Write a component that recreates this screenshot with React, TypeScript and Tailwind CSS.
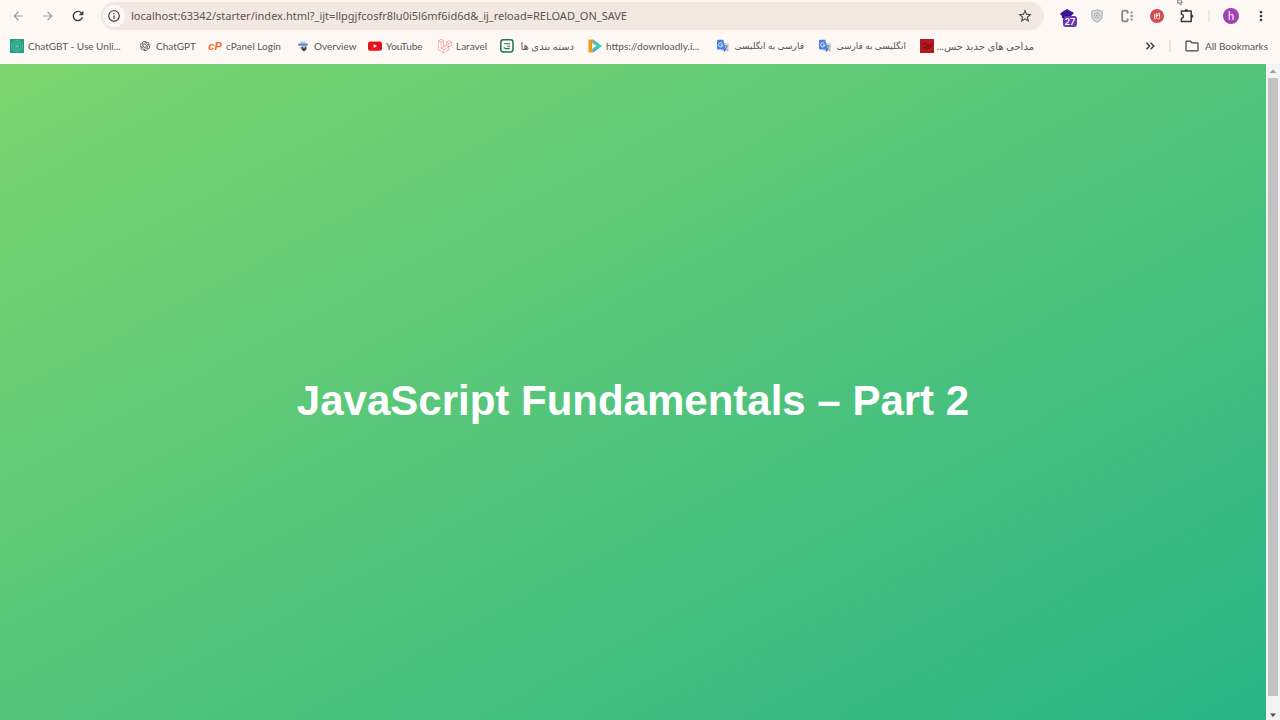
import type { ReactNode } from "react";
import { FaLaravel } from "react-icons/fa";
import {
  MdArrowBack,
  MdArrowForward,
  MdInfoOutline,
  MdMoreVert,
  MdRefresh,
  MdStarBorder,
} from "react-icons/md";
import { SiOpenai } from "react-icons/si";

function SpiralIcon() {
  return (
    <svg viewBox="0 0 14 14" className="size-full">
      <rect width="14" height="14" fill="#1f9f7c" />
      <g fill="none" stroke="#6fcbb2" strokeWidth="0.6">
        <circle cx="7" cy="7" r="5.6" />
        <circle cx="7" cy="7" r="3.8" />
        <circle cx="7" cy="7" r="2" />
      </g>
      <circle cx="7" cy="7" r="0.7" fill="#d5f5ea" />
    </svg>
  );
}

function OverviewIcon() {
  return (
    <svg viewBox="0 0 14 14" className="size-full">
      <path d="M4 4.6 L4.8 2.6 H9.2 L10 4.6 Z" fill="#a9bfe4" />
      <path d="M2.5 4.6 H11.5 L12 6.8 H2 Z" fill="#5b84cc" />
      <path d="M3 8 H6 V10 H4.4 Z" fill="#b9cbe8" />
      <path d="M5.6 7.6 H10.4 V10.4 L8 12.6 L5.6 10.4 Z" fill="#39424f" />
      <path d="M7 7.6 H9 L8 9.8 Z" fill="#fff" />
    </svg>
  );
}

function YoutubeIcon() {
  return (
    <svg viewBox="0 0 14 14" className="size-full">
      <rect x="0" y="2.4" width="14" height="9.4" rx="2.2" fill="#e3131b" />
      <path d="M5.6 5.2 L9 7.1 L5.6 9 Z" fill="#fff" />
    </svg>
  );
}

function ListIcon() {
  return (
    <svg viewBox="0 0 14 14" className="size-full" fill="none" stroke="#1c7a50">
      <rect x="0.8" y="0.8" width="12.2" height="12.2" rx="2.4" strokeWidth="1.5" />
      <path d="M4 4.8 H10 M4 8 Q4.2 9.6 6 9.6 H9.6 M7 7.2 H10" strokeWidth="1.1" />
    </svg>
  );
}

function DownloadlyIcon() {
  return (
    <svg viewBox="0 0 14 14" className="size-full">
      <path d="M0.5 0.5 H5 V13.5 H0.5 Z" fill="#ee9a22" />
      <path d="M5 0.5 L14 7 L5 13.5 Z" fill="#35d0b4" />
      <path d="M5 0.5 L9.5 3.7 L5 6 Z" fill="#5cb3dc" />
      <path d="M4 4 L8.6 7 L4 10 Z" fill="#fff4e4" />
      <path d="M5 10 L9 7.4 L11 9.2 L5 13.5 Z" fill="#3bb4e8" />
    </svg>
  );
}

function TranslateIcon() {
  return (
    <svg viewBox="0 0 14 14" className="size-full">
      <rect x="5.5" y="4" width="7.5" height="8.6" rx="1" fill="#d5d9e2" />
      <path d="M7.6 7 H12 M9.8 6 V7 M11.3 7 Q10.5 10 8.3 11 M8.6 8.3 Q9.8 10.4 11.8 11" fill="none" stroke="#6d7f9e" strokeWidth="0.8" />
      <path d="M2 0.8 H7.2 L10 10.4 H2 Q1 10.4 1 9.4 V1.8 Q1 0.8 2 0.8 Z" fill="#4a80e2" />
      <path d="M7.4 10.4 H10 L8.6 12.8 Z" fill="#2f57b5" />
      <path d="M6.3 4.5 A2.1 2.1 0 1 0 6.8 6 H4.8" fill="none" stroke="#fff" strokeWidth="0.9" />
    </svg>
  );
}

function RedIcon() {
  return (
    <svg viewBox="0 0 14 14" className="size-full">
      <rect width="14" height="14" fill="#b51a22" />
      <path d="M2 5.5 Q5 3 7 5.5 T12 4.5 M2.5 9.5 Q5 7 7 8.8 T11.5 7 M5 11 L9 6" fill="none" stroke="#74101a" strokeWidth="1.2" />
    </svg>
  );
}

function CpanelIcon() {
  return (
    <span className="font-['Liberation_Sans',sans-serif] text-[11px] font-bold italic text-[#f26a2e]">
      cP
    </span>
  );
}

type Bookmark = { label: string; style: string; icon: ReactNode; rtl?: boolean };

const bookmarks: Bookmark[] = [
  { label: "ChatGBT - Use Unli...", style: "w-24", icon: <SpiralIcon /> },
  { label: "ChatGPT", style: "w-[38px]", icon: <SiOpenai className="size-2.5 text-[#4b4745]" /> },
  { label: "cPanel Login", style: "w-14", icon: <CpanelIcon /> },
  { label: "Overview", style: "w-10", icon: <OverviewIcon /> },
  { label: "YouTube", style: "w-[38px]", icon: <YoutubeIcon /> },
  { label: "Laravel", style: "w-[30px]", icon: <FaLaravel className="size-full text-[#ee7c74]" /> },
  { label: "دسته بندی ها", style: "w-14", icon: <ListIcon />, rtl: true },
  { label: "https://downloadly.i...", style: "w-24", icon: <DownloadlyIcon /> },
  { label: "فارسی به انگلیسی", style: "w-[70px] text-[9px]", icon: <TranslateIcon />, rtl: true },
  { label: "انگلیسی به فارسی", style: "w-[70px] text-[9px]", icon: <TranslateIcon />, rtl: true },
  { label: "مداحی های جدید حس...", style: "w-24", icon: <RedIcon />, rtl: true },
];

function ToolButton({ label, children }: { label: string; children: ReactNode }) {
  return (
    <button
      type="button"
      aria-label={label}
      className="flex h-7 w-[30px] shrink-0 items-center justify-center"
    >
      {children}
    </button>
  );
}

function Toolbar() {
  return (
    <div className="flex h-8 items-center pl-[3px] pr-1">
      <ToolButton label="Back">
        <MdArrowBack className="size-3.5 text-[#a49c98]" />
      </ToolButton>
      <ToolButton label="Forward">
        <MdArrowForward className="size-3.5 text-[#a49c98]" />
      </ToolButton>
      <ToolButton label="Reload">
        <MdRefresh className="size-4 text-[#3f3735]" />
      </ToolButton>

      <div className="mx-2 flex h-7 min-w-0 flex-1 items-center rounded-full bg-[#f3e7e2] pl-0.5">
        <button
          type="button"
          aria-label="Site information"
          className="flex size-[22px] shrink-0 items-center justify-center rounded-full bg-[#fef8f4]"
        >
          <MdInfoOutline className="size-3.5 text-[#3f3735]" />
        </button>
        <input
          type="text"
          aria-label="Address"
          defaultValue="localhost:63342/starter/index.html?_ijt=llpgjfcosfr8lu0i5l6mf6id6d&_ij_reload=RELOAD_ON_SAVE"
          className="ml-1.5 min-w-0 flex-1 bg-transparent font-['Noto_Sans',sans-serif] text-[11px] text-[#5d5350] outline-none"
        />
        <button
          type="button"
          aria-label="Bookmark this page"
          className="flex w-[38px] shrink-0 items-center justify-center"
        >
          <MdStarBorder className="size-4 text-[#4a413e]" />
        </button>
      </div>

      <ToolButton label="Extension with 27 items">
        <span className="relative size-4">
          <svg viewBox="0 0 16 16" className="size-4">
            <path d="M8 1 L15 5 L12 8 V10 H3 V8 L1 6 L3 4 Z" fill="#3b149b" />
            <path d="M3 8 H12 V9.4 H3 Z" fill="#220a66" />
          </svg>
          <span className="absolute left-1 top-2 flex h-[11px] w-[14px] items-center justify-center rounded-[3px] bg-[#6636b3] text-[9px] font-bold text-white">
            27
          </span>
        </span>
      </ToolButton>
      <ToolButton label="Shield">
        <svg viewBox="0 0 14 16" className="h-3.5 w-3">
          <path d="M7 0.8 L13 2.6 V8 Q13 12.6 7 15.2 Q1 12.6 1 8 V2.6 Z" fill="#dadde2" stroke="#a9aeb7" strokeWidth="1.2" />
          <circle cx="7" cy="7.4" r="3.2" fill="none" stroke="#a3a9b3" strokeWidth="1" />
          <circle cx="7" cy="7.4" r="1.2" fill="#a3a9b3" />
        </svg>
      </ToolButton>
      <ToolButton label="Code helper">
        <svg viewBox="0 0 14 14" className="size-3.5" fill="none" stroke="#8c8886">
          <path d="M7.6 4.6 V3.2 Q7.6 1.6 6 1.6 H4.2 Q2.2 1.6 2.2 3.6 V10.4 Q2.2 12.4 4.2 12.4 H6 Q7.6 12.4 7.6 10.8 V9.4" strokeWidth="1.9" />
          <path d="M11.6 2.6 V11.6" strokeWidth="1.9" strokeDasharray="2 1.4" />
        </svg>
      </ToolButton>
      <ToolButton label="Red extension">
        <svg viewBox="0 0 14 14" className="size-3.5">
          <circle cx="7" cy="7" r="7" fill="#cf4f50" />
          <path d="M4.6 4.8 V9.6 Q4.6 10.6 6 9.6 L8.2 4.4 Q9.6 3.2 9.6 4.6 V9 Q9 10.6 7.4 9.8 M6.4 4 V8 M4.6 7.2 L9.6 6" fill="none" stroke="#fbe3df" strokeWidth="0.9" />
        </svg>
      </ToolButton>
      <ToolButton label="Extensions">
        <svg viewBox="0 0 16 16" className="size-4" fill="none" stroke="#3f3735" strokeWidth="1.5" strokeLinejoin="round">
          <path d="M2.4 3 H12.2 V13.4 H2.4 V10.4 Q4.4 10 4.4 8.2 Q4.4 6.4 2.4 6 Z" />
          <path d="M5.6 3 Q5.8 1.6 7.3 1.6 Q8.8 1.6 9 3 Z M12.2 6.6 Q14 6.8 14 8.2 Q14 9.6 12.2 9.8 Z" fill="#3f3735" strokeWidth="0.8" />
        </svg>
      </ToolButton>
      <span className="mx-1.5 h-3 w-0.5 shrink-0 bg-[#fae6d6]" />
      <ToolButton label="Profile">
        <span className="flex size-4 items-center justify-center rounded-full bg-[#a142b4] text-[11px] text-white">
          h
        </span>
      </ToolButton>
      <ToolButton label="Menu">
        <MdMoreVert className="size-4 text-[#3f3735]" />
      </ToolButton>
    </div>
  );
}

function BookmarksBar() {
  return (
    <nav className="flex h-8 items-center gap-3.5 pl-2.5 pr-3 pb-1 text-[10px] text-[#5d5552]">
      {bookmarks.map((b) => (
        <a key={b.label} href="#" className="flex shrink-0 items-center gap-1">
          <span className="flex size-3.5 items-center justify-center">{b.icon}</span>
          <span dir={b.rtl ? "rtl" : "ltr"} className={`${b.style} whitespace-nowrap`}>
            {b.label}
          </span>
        </a>
      ))}
      <div className="ml-auto flex shrink-0 items-center gap-3.5">
        <button type="button" aria-label="More bookmarks">
          <svg viewBox="0 0 10 10" className="size-2.5" fill="none" stroke="#3f3735" strokeWidth="1.4">
            <path d="M1.4 1.8 L4.6 5 L1.4 8.2 M5.6 1.8 L8.8 5 L5.6 8.2" />
          </svg>
        </button>
        <span className="h-3 w-0.5 bg-[#f9dfc8]" />
        <button type="button" className="flex items-center gap-1.5">
          <svg viewBox="0 0 14 12" className="h-3 w-3.5" fill="none" stroke="#4a413e" strokeWidth="1.2" strokeLinejoin="round">
            <path d="M1 2 Q1 1.2 1.8 1.2 H5.4 L6.8 2.8 H12.2 Q13 2.8 13 3.6 V10 Q13 10.8 12.2 10.8 H1.8 Q1 10.8 1 10 Z" />
          </svg>
          <span className="whitespace-nowrap">All Bookmarks</span>
        </button>
      </div>
    </nav>
  );
}

function Scrollbar() {
  return (
    <div className="flex w-3.5 shrink-0 flex-col items-center bg-[#f3f3f3]">
      <svg viewBox="0 0 14 14" className="size-3.5">
        <path d="M3.6 9 L7 5.4 L10.4 9 Z" fill="#a0a0a0" />
      </svg>
      <div className="w-2.5 flex-1 bg-[#c1c1c1]" />
      <svg viewBox="0 0 14 24" className="h-6 w-3.5">
        <path d="M4 17.6 H10 L7 21 Z" fill="#4c4c4c" />
      </svg>
    </div>
  );
}

export default function App() {
  return (
    <div className="relative flex h-screen flex-col overflow-hidden bg-[#fef8f4] font-['Lato','DejaVu_Sans',sans-serif]">
      <header className="shrink-0">
        <Toolbar />
        <BookmarksBar />
      </header>

      <div className="flex min-h-0 flex-1">
        <main className="min-w-0 flex-1 overflow-hidden">
          <div className="flex h-[calc(100%+16px)] items-center justify-center bg-[linear-gradient(to_top_left,#28b487,#7dd56f)]">
            <h1 className="text-center font-['Liberation_Sans',Arial,sans-serif] text-[42px] font-bold text-white">
              JavaScript Fundamentals – Part 2
            </h1>
          </div>
        </main>
        <Scrollbar />
      </div>

      <svg viewBox="0 0 8 8" className="absolute right-24 top-0 h-1.5 w-2">
        <path d="M1 0 V4.4 L3 3.2 L4.4 6.4 L6 5.8 L5 3 H7.4 L5 0 Z" fill="#fff" stroke="#333" strokeWidth="0.8" />
      </svg>
    </div>
  );
}
